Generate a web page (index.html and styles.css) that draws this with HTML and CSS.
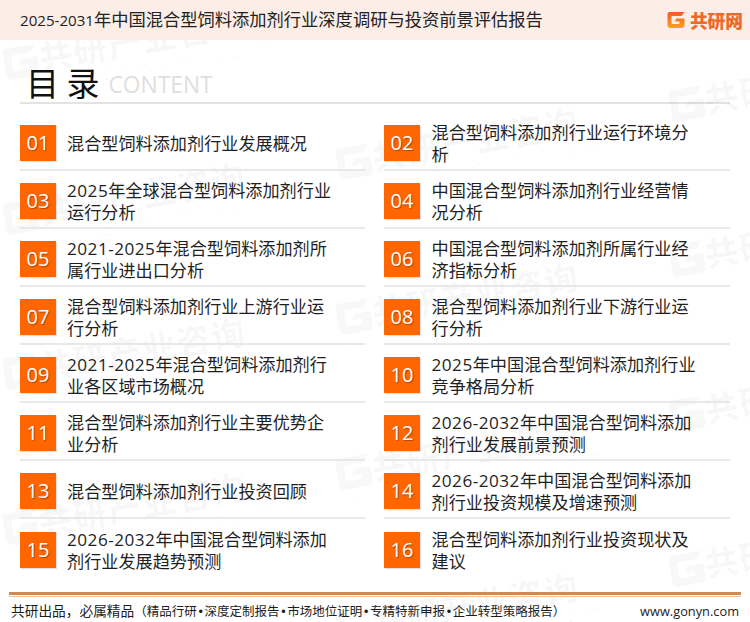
FILE: index.html
```
<!DOCTYPE html>
<html lang="zh">
<head>
<meta charset="utf-8">
<title>目录</title>
<link rel="stylesheet" href="styles.css">
</head>
<body>
<div class="page">
  <div class="marks" aria-hidden="true">
    <div class="mark a0"><svg class="mark-g" viewBox="0 0 17 16"><path d="M2 0H17L14 4H5Q4 4 4 5V11Q4 12 5 12H12V9.500H7L9 6.500H17V13Q17 16 14 16H3Q0 16 0 13V3Q0 0 2 0Z"/></svg>共研产业咨询<small>www.gonyn.com</small></div>
    <div class="mark a1"><svg class="mark-g" viewBox="0 0 17 16"><path d="M2 0H17L14 4H5Q4 4 4 5V11Q4 12 5 12H12V9.500H7L9 6.500H17V13Q17 16 14 16H3Q0 16 0 13V3Q0 0 2 0Z"/></svg>共研产业咨询<small>www.gonyn.com</small></div>
    <div class="mark a2"><svg class="mark-g" viewBox="0 0 17 16"><path d="M2 0H17L14 4H5Q4 4 4 5V11Q4 12 5 12H12V9.500H7L9 6.500H17V13Q17 16 14 16H3Q0 16 0 13V3Q0 0 2 0Z"/></svg>共研产业咨询<small>www.gonyn.com</small></div>
    <div class="mark a3"><svg class="mark-g" viewBox="0 0 17 16"><path d="M2 0H17L14 4H5Q4 4 4 5V11Q4 12 5 12H12V9.500H7L9 6.500H17V13Q17 16 14 16H3Q0 16 0 13V3Q0 0 2 0Z"/></svg>共研产业咨询<small>www.gonyn.com</small></div>
    <div class="mark b0"><svg class="mark-g" viewBox="0 0 17 16"><path d="M2 0H17L14 4H5Q4 4 4 5V11Q4 12 5 12H12V9.500H7L9 6.500H17V13Q17 16 14 16H3Q0 16 0 13V3Q0 0 2 0Z"/></svg>共研产业咨询<small>www.gonyn.com</small></div>
    <div class="mark b1"><svg class="mark-g" viewBox="0 0 17 16"><path d="M2 0H17L14 4H5Q4 4 4 5V11Q4 12 5 12H12V9.500H7L9 6.500H17V13Q17 16 14 16H3Q0 16 0 13V3Q0 0 2 0Z"/></svg>共研产业咨询<small>www.gonyn.com</small></div>
    <div class="mark b2"><svg class="mark-g" viewBox="0 0 17 16"><path d="M2 0H17L14 4H5Q4 4 4 5V11Q4 12 5 12H12V9.500H7L9 6.500H17V13Q17 16 14 16H3Q0 16 0 13V3Q0 0 2 0Z"/></svg>共研产业咨询<small>www.gonyn.com</small></div>
    <div class="mark b3"><svg class="mark-g" viewBox="0 0 17 16"><path d="M2 0H17L14 4H5Q4 4 4 5V11Q4 12 5 12H12V9.500H7L9 6.500H17V13Q17 16 14 16H3Q0 16 0 13V3Q0 0 2 0Z"/></svg>共研产业咨询<small>www.gonyn.com</small></div>
    <div class="mark c0"><svg class="mark-g" viewBox="0 0 17 16"><path d="M2 0H17L14 4H5Q4 4 4 5V11Q4 12 5 12H12V9.500H7L9 6.500H17V13Q17 16 14 16H3Q0 16 0 13V3Q0 0 2 0Z"/></svg>共研</div>
    <div class="mark c1"><svg class="mark-g" viewBox="0 0 17 16"><path d="M2 0H17L14 4H5Q4 4 4 5V11Q4 12 5 12H12V9.500H7L9 6.500H17V13Q17 16 14 16H3Q0 16 0 13V3Q0 0 2 0Z"/></svg>共研</div>
    <div class="mark c2"><svg class="mark-g" viewBox="0 0 17 16"><path d="M2 0H17L14 4H5Q4 4 4 5V11Q4 12 5 12H12V9.500H7L9 6.500H17V13Q17 16 14 16H3Q0 16 0 13V3Q0 0 2 0Z"/></svg>共研</div>
    <div class="mark c3"><svg class="mark-g" viewBox="0 0 17 16"><path d="M2 0H17L14 4H5Q4 4 4 5V11Q4 12 5 12H12V9.500H7L9 6.500H17V13Q17 16 14 16H3Q0 16 0 13V3Q0 0 2 0Z"/></svg>共研</div>
  </div>
  <header class="top">
    <div class="top-title"><span class="top-num">2025-2031</span>年中国混合型饲料添加剂行业深度调研与投资前景评估报告</div>
    <div class="logo">
      <svg class="logo-mark" width="18" height="16" viewBox="0 0 17 16"><defs><linearGradient id="lg" x1="0" y1="0" x2="0" y2="1"><stop offset="0" stop-color="#ef5a24"/><stop offset="1" stop-color="#f9a11b"/></linearGradient></defs><path d="M2 0H17L14 4H5Q4 4 4 5V11Q4 12 5 12H12V9.500H7L9 6.500H17V13Q17 16 14 16H3Q0 16 0 13V3Q0 0 2 0Z" fill="url(#lg)"/></svg>
      <span class="logo-text">共研网</span>
    </div>
  </header>
  <div class="heading">
    <h1 class="heading-main">目 录</h1>
    <span class="heading-sub">CONTENT</span>
  </div>
  <ol class="toc">
    <li class="item"><span class="num">01</span><span class="label">混合型饲料添加剂行业发展概况</span></li>
    <li class="item"><span class="num">02</span><span class="label">混合型饲料添加剂行业运行环境分析</span></li>
    <li class="item"><span class="num">03</span><span class="label"><span class="digits">2025</span>年全球混合型饲料添加剂行业运行分析</span></li>
    <li class="item"><span class="num">04</span><span class="label">中国混合型饲料添加剂行业经营情况分析</span></li>
    <li class="item"><span class="num">05</span><span class="label"><span class="digits">2021-2025</span>年混合型饲料添加剂所属行业进出口分析</span></li>
    <li class="item"><span class="num">06</span><span class="label">中国混合型饲料添加剂所属行业经济指标分析</span></li>
    <li class="item"><span class="num">07</span><span class="label">混合型饲料添加剂行业上游行业运行分析</span></li>
    <li class="item"><span class="num">08</span><span class="label">混合型饲料添加剂行业下游行业运行分析</span></li>
    <li class="item"><span class="num">09</span><span class="label"><span class="digits">2021-2025</span>年混合型饲料添加剂行业各区域市场概况</span></li>
    <li class="item"><span class="num">10</span><span class="label"><span class="digits">2025</span>年中国混合型饲料添加剂行业竞争格局分析</span></li>
    <li class="item"><span class="num">11</span><span class="label">混合型饲料添加剂行业主要优势企业分析</span></li>
    <li class="item"><span class="num">12</span><span class="label"><span class="digits">2026-2032</span>年中国混合型饲料添加剂行业发展前景预测</span></li>
    <li class="item"><span class="num">13</span><span class="label">混合型饲料添加剂行业投资回顾</span></li>
    <li class="item"><span class="num">14</span><span class="label"><span class="digits">2026-2032</span>年中国混合型饲料添加剂行业投资规模及增速预测</span></li>
    <li class="item"><span class="num">15</span><span class="label"><span class="digits">2026-2032</span>年中国混合型饲料添加剂行业发展趋势预测</span></li>
    <li class="item"><span class="num">16</span><span class="label">混合型饲料添加剂行业投资现状及建议</span></li>
  </ol>
  <footer class="foot">
    <span class="foot-left">共研出品，必属精品<span class="foot-list">（精品行研<span class="dot">•</span>深度定制报告<span class="dot">•</span>市场地位证明<span class="dot">•</span>专精特新申报<span class="dot">•</span>企业转型策略报告）</span></span>
    <span class="foot-right">www.gonyn.com</span>
  </footer>
</div>
</body>
</html>
```
FILE: styles.css
```
* { box-sizing: border-box; }
html, body { margin: 0; padding: 0; background: #fff; }
body { font-family: "Open Sans", "Noto Sans CJK SC", sans-serif; color: #1c1c1c; }
.page { position: relative; width: 750px; height: 622px; overflow: hidden; display: flex; flex-direction: column; }

.top { position: relative; z-index: 2; height: 40px; flex: none; background: #fceee7; display: flex; align-items: center; justify-content: space-between; padding: 0 7px 0 20px; }
.top-title { font-size: 17.27px; line-height: 40px; white-space: nowrap; color: #222; }
.top-num { font-size: 15.1px; }
.logo { display: flex; align-items: center; gap: 5px; }
.logo-mark { display: block; }
.logo-text { font-family: "Noto Sans CJK SC", sans-serif; font-weight: 900; font-size: 17.7px; line-height: 20px; color: #e96a2a; }

.heading { height: 64px; flex: none; margin: 0 20px; border-bottom: 2px solid #e3e3e3; display: flex; align-items: flex-end; padding: 0 0 3px 6px; }
.heading-main { margin: 0; font-family: "Noto Sans CJK SC", sans-serif; font-weight: 400; font-size: 33px; line-height: 34px; color: #111; white-space: nowrap; }
.heading-sub { font-size: 22.8px; line-height: 32px; color: #e0e0e0; margin-left: 9px; margin-bottom: -2px; }

.toc { list-style: none; margin: 9px 0 0; padding: 0 20px; display: grid; grid-template-columns: 345px 346px; column-gap: 19px; grid-auto-rows: 58px; position: relative; z-index: 1; }
.item { display: flex; align-items: center; border-bottom: 2px solid #e8e8e8; padding-top: 4px; }
.item:nth-child(n+15) { border-bottom: 0; }
.num { flex: none; width: 36px; height: 36px; background: #ff6600; color: #fff; font-size: 20px; line-height: 36px; text-align: center; text-shadow: 1px 1px 1px rgba(120,50,0,.6); box-shadow: 1px 1px 1px rgba(0,0,0,.12); }
.label { margin: 2px 0 0 11px; width: 270px; font-size: 17.15px; line-height: 22.4px; color: #1f1f1f; }
.item:nth-child(2n) .label { margin-left: 11.5px; }
.digits { letter-spacing: .5px; }

.foot { position: absolute; left: 9px; right: 9px; top: 592px; height: 30px; border-top: 3px solid #d08a50; display: flex; justify-content: space-between; align-items: center; padding: 4px 2px 0 2px; z-index: 1; }
.foot::before { content: ""; position: absolute; left: 0; right: 0; top: 1px; height: 1px; background: #e9c4a3; }
.foot-left { font-size: 13.7px; line-height: 22px; white-space: nowrap; font-family: "Noto Sans CJK SC", sans-serif; }
.foot-list { font-size: 12.5px; }
.dot { font-family: "Liberation Sans", sans-serif; margin: 0 1.7px; }
.foot-right { font-size: 12.8px; line-height: 22px; white-space: nowrap; }

.marks { position: absolute; inset: 40px 0 0 0; overflow: hidden; pointer-events: none; }
.mark { position: absolute; font-family: "Noto Sans CJK SC", sans-serif; font-weight: 900; font-size: 34px; line-height: 36px; color: rgba(0,0,0,.028); transform: rotate(-10deg); transform-origin: 0 18px; white-space: nowrap; letter-spacing: 1px; }
.mark small { display: block; font-family: "Open Sans", sans-serif; font-weight: 400; font-size: 18px; line-height: 20px; letter-spacing: 10px; margin-left: 5px; }
.mark-g { width: 34px; height: 32px; fill: currentColor; vertical-align: -4px; margin-right: 1px; }
.a0 { left: 4px; top: 5px; }
.a1 { left: 4px; top: 160px; }
.a2 { left: 4px; top: 315px; }
.a3 { left: 4px; top: 470px; }
.b0 { left: 337px; top: 105px; }
.b1 { left: 337px; top: 260px; }
.b2 { left: 337px; top: 415px; }
.b3 { left: 337px; top: 570px; }
.c0 { left: 670px; top: 47px; }
.c1 { left: 670px; top: 202px; }
.c2 { left: 670px; top: 357px; }
.c3 { left: 670px; top: 512px; }
```
